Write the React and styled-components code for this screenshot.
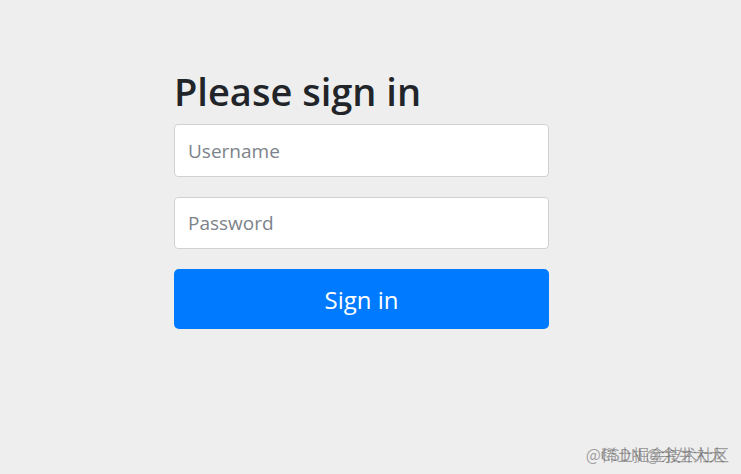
import React from "react";
import styled, { createGlobalStyle } from "styled-components";

const Global = createGlobalStyle`
  html, body { margin: 0; padding: 0; background: #eeeeee; }
  body { font-family: "Open Sans", "Noto Sans", sans-serif; }
`;

const Page = styled.div`
  position: relative;
  width: 741px;
  height: 474px;
  background: #eeeeee;
  overflow: hidden;
`;

const Form = styled.form`
  display: flex;
  flex-direction: column;
  width: 375px;
  margin-left: 174px;
  padding-top: 66px;
`;

const Heading = styled.h2`
  margin: 0 0 8px 0;
  font-family: "Open Sans", "Noto Sans", sans-serif;
  font-weight: 600;
  font-size: 38px;
  line-height: 50px;
  color: #212529;
  letter-spacing: 0;
`;

const Input = styled.input`
  box-sizing: border-box;
  width: 100%;
  height: ${(p) => p.$h}px;
  margin-bottom: ${(p) => p.$mb}px;
  padding: 0 13px;
  border: 1px solid #cfd2d5;
  border-radius: 4px;
  background: #ffffff;
  font-family: "Open Sans", "Noto Sans", sans-serif;
  font-size: 19px;
  color: #495057;
  outline: none;
  &::placeholder { color: #7c838a; }
`;

const Button = styled.button`
  box-sizing: border-box;
  width: 100%;
  height: 60px;
  border: none;
  border-radius: 5px;
  background: #007bff;
  color: #ffffff;
  font-family: "Open Sans", "Noto Sans", sans-serif;
  font-size: 24px;
  cursor: pointer;
`;

const Watermark = styled.div`
  position: absolute;
  right: 12px;
  bottom: 8px;
  width: 140px;
  height: 24px;
  font-family: "Noto Sans CJK SC", sans-serif;
  font-size: 16px;
  color: rgba(90, 90, 90, 0.55);
`;

const Mark = styled.span`
  position: absolute;
  right: ${(p) => p.$r}px;
  top: 0;
  white-space: nowrap;
`;

export default function App() {
  return (
    <Page>
      <Global />
      <Form onSubmit={(e) => e.preventDefault()}>
        <Heading>Please sign in</Heading>
        <Input $h={53} $mb={20} placeholder="Username" />
        <Input $h={52} $mb={20} type="password" placeholder="Password" />
        <Button type="submit">Sign in</Button>
      </Form>
      <Watermark>
        <Mark $r={0}>@稀土掘金技术社区</Mark>
        <Mark $r={4}>CSDN @余生大大</Mark>
      </Watermark>
    </Page>
  );
}
